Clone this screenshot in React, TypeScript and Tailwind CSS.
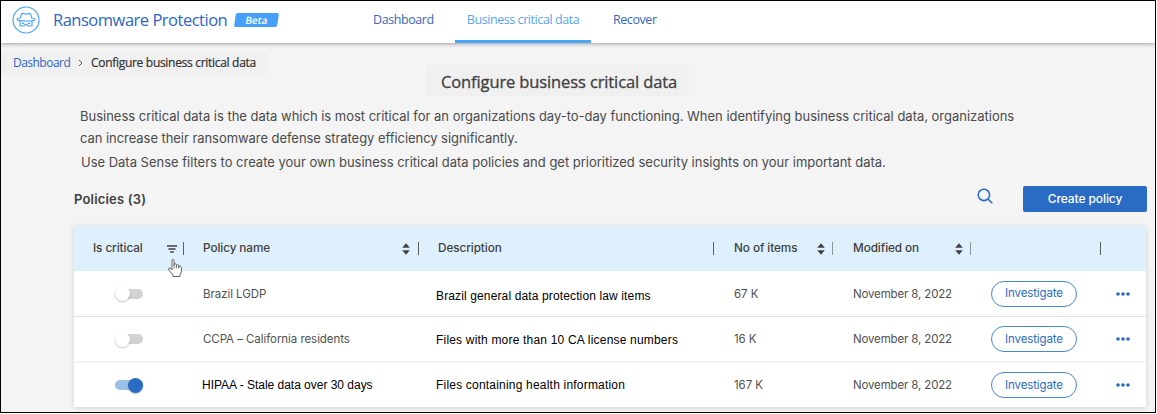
import React from "react";

const SEGOE = "font-['Open_Sans',sans-serif]";
const ARIAL = "font-['Liberation_Sans',sans-serif]";

function Logo() {
  return (
    <svg width="28" height="28" viewBox="0 0 28 28" fill="none" stroke="#4aa5f8" strokeWidth="1.2" strokeLinejoin="round">
      <circle cx="14" cy="14" r="13" />
      <path d="M8.4 12 L9.4 8.2 Q9.7 7.2 10.8 7.4 L12.6 7.9 Q14 8.2 15.4 7.9 L17.2 7.4 Q18.3 7.2 18.6 8.2 L19.6 12 Q22.8 12.4 22.8 13.4 Q22.8 15 14 15 Q5.2 15 5.2 13.4 Q5.2 12.4 8.4 12 Z" />
      <path d="M8 15 V20 H12.2 L13.2 18.4 H14.8 L15.8 20 H20 V15" />
      <path d="M9.8 17.4 H12.2 M15.8 17.4 H18.2" strokeWidth="1.4" />
    </svg>
  );
}

function Sort() {
  return (
    <svg width="8" height="12" viewBox="0 0 8 12" fill="#404040">
      <path d="M4 0.2 L7.8 4.8 H0.2 Z" />
      <path d="M4 11.8 L7.8 7.2 H0.2 Z" />
    </svg>
  );
}

function Filter() {
  return (
    <svg width="10" height="8" viewBox="0 0 10 8" stroke="#404040" strokeWidth="1.6">
      <path d="M0 1 H10 M1.4 4 H8.6 M3.2 7 H6.8" />
    </svg>
  );
}

function Bar({ light = false }: { light?: boolean }) {
  return <span className={light ? "h-[13px] w-px bg-[#8a939a]" : "h-[13px] w-px bg-[#5a6066]"} />;
}

function Toggle({ on }: { on: boolean }) {
  return (
    <span className={`flex h-[10px] w-7 items-center rounded-full ${on ? "justify-end bg-[#9cc0e8]" : "bg-[#d2d2d2]"}`}>
      <span className={`h-[15px] w-[15px] shrink-0 rounded-full shadow-[0_1px_2px_rgba(0,0,0,0.25)] ${on ? "bg-[#2a6cc4]" : "bg-white"}`} />
    </span>
  );
}

const rows = [
  { on: false, name: "Brazil LGDP", desc: "Brazil general data protection law items", n: "67 K", h: "h-[46px] border-b border-[#e2e2e2]", d: "pt-[4px] tracking-[0.13px]" },
  { on: false, name: "CCPA – California residents", desc: "Files with more than 10 CA license numbers", n: "16 K", h: "h-[46px] border-b-2 border-[#f2f2f2]", d: "pt-[2px] tracking-[0.19px]" },
  { on: true, name: "HIPAA - Stale data over 30 days", desc: "Files containing health information", n: "167 K", h: "h-[44px]", d: "tracking-[0.2px]" },
];

const GRID = "grid grid-cols-[110px_235px_295px_119px_138px_130px_45px] items-center";

export default function App() {
  return (
    <div className="h-[414px] w-[1157px] overflow-hidden bg-white">
      <div className="flex h-[413px] w-[1156px] flex-col overflow-hidden border border-black bg-[#f4f4f4] font-['Inter',sans-serif] text-[#404040]">
        <header className="flex h-[42px] shrink-0 items-center bg-white pl-[11px] shadow-[0_1px_4px_rgba(0,0,0,0.35)]">
          <div className="pb-[5px]"><Logo /></div>
          <span className={`ml-[13px] w-[182px] whitespace-nowrap pb-[5px] text-[16.5px] leading-6 tracking-[-0.49px] text-[#2f66c0] ${SEGOE}`}>Ransomware Protection</span>
          <span className="mb-[4px] flex h-[14px] w-[43px] -skew-x-[8deg] items-center justify-center rounded-[2px] bg-[#469ff8]">
            <span className={`text-[10px] font-semibold leading-none text-white ${SEGOE}`}>Beta</span>
          </span>
          <nav className={`ml-[95px] flex h-full whitespace-nowrap text-[12.5px] leading-[37px] tracking-[-0.43px] text-[#3768be] ${SEGOE}`}>
            <span className="w-[82px]">Dashboard</span>
            <span className="w-[136px] border-b-[3px] border-[#4aa5fa] text-center text-[#57a5ef]">Business critical data</span>
            <span className="ml-[22px]">Recover</span>
          </nav>
        </header>

        <div className={`mt-[9px] flex h-[22px] w-[266px] shrink-0 items-center bg-[#f0f0f0] pb-px pl-[12px] text-[12px] ${SEGOE}`}>
          <span className="w-[58px] tracking-[-0.52px] text-[#2f66c0]">Dashboard</span>
          <svg className="ml-[7px]" width="5" height="8" viewBox="0 0 5 8" fill="none" stroke="#555"><path d="M1 1 L4 4 L1 7" /></svg>
          <span className="ml-[8px] whitespace-nowrap tracking-[-0.3px] text-[#303030] [-webkit-text-stroke:0.2px]">Configure business critical data</span>
        </div>

        <h1 className={`-mt-[9px] ml-[425px] flex h-[31px] w-[263px] shrink-0 items-center whitespace-nowrap bg-[#f0f0f0] pl-[15px] pt-[2px] text-[16.5px] leading-6 tracking-[-0.12px] [-webkit-text-stroke:0.3px] ${SEGOE}`}>Configure business critical data</h1>

        <div className="ml-[79px] mt-[9px] shrink-0 whitespace-nowrap text-[13px] leading-[22px] tracking-[-0.013px] text-[#4a4a4a]">
          <p>Business critical data is the data which is most critical for an organizations day-to-day functioning. When identifying business critical data, organizations</p>
          <p className="tracking-[-0.055px]">can increase their ransomware defense strategy efficiency significantly.</p>
          <p className="mt-[2px] pl-px">Use Data Sense filters to create your own business critical data policies and get prioritized security insights on your important data.</p>
        </div>

        <div className="mt-[12px] flex h-[27px] shrink-0 items-center pl-[73px]">
          <h2 className="w-[903px] pt-[2px] text-[13px] font-semibold tracking-[0.18px]">Policies (3)</h2>
          <svg className="mb-[5px]" width="16" height="16" viewBox="0 0 16 16" fill="none" stroke="#2a6cc4" strokeWidth="1.6"><circle cx="6.9" cy="6.9" r="5.7" /><path d="M11 11 L15.3 15.3" /></svg>
          <button className="ml-[30px] h-[26px] w-[124px] rounded-[2px] bg-[#2a6cc4] pt-px text-[12px] font-medium tracking-[-0.1px] text-white">Create policy</button>
        </div>

        <div className="ml-[73px] mt-[14px] w-[1072px] shrink-0 bg-white shadow-[0_1px_5px_rgba(0,0,0,0.15)]">
          <div className={`${GRID} relative h-[45px] bg-[#def0fc] text-[11.75px] font-medium tracking-[-0.08px]`}>
            <span className="flex items-center justify-between pl-[19px]">Is critical<span className="flex w-[17px] items-center gap-[6px]"><Filter /><Bar /></span></span>
            <span className="flex items-center justify-between pl-[19px]">Policy name<span className="flex items-center gap-[8px]"><Sort /><Bar /></span></span>
            <span className="flex items-center justify-between pl-[19px]">Description<Bar /></span>
            <span className="flex items-center justify-between pl-[20px]">No of items<span className="flex items-center gap-[7px]"><Sort /><Bar light /></span></span>
            <span className="flex items-center justify-between pl-[20px]">Modified on<span className="flex items-center gap-[7px]"><Sort /><Bar light /></span></span>
            <span className="flex justify-end"><Bar /></span>
            <svg className="absolute left-[93px] top-[32px]" width="16" height="20" viewBox="0 0 16 20" fill="white" stroke="#666" strokeWidth="1" strokeLinejoin="round">
              <path d="M5 12 V2.6 Q5 1.4 6 1.4 Q7 1.4 7 2.6 V7.5 Q7 5.5 8.2 5.5 Q9.4 5.6 9.4 7.5 V8.5 Q9.5 6.4 10.6 6.4 Q11.8 6.6 11.8 8.4 V9.4 Q12 7.7 13.2 8 Q14.4 8.4 14.4 10 V14 L13 16.4 V18.5 H6 V17 L1.8 12 Q1 10.6 2 10.2 Q3 9.8 4 11 Z" />
              <path d="M7 7.5 V10.5 M9.4 8 V10.5 M11.8 9 V10.5" strokeWidth="0.8" />
            </svg>
          </div>
          {rows.map((r) => (
            <div key={r.name} className={`${GRID} ${r.h} text-[11.5px] tracking-[-0.06px] text-[#505050]`}>
              <span className="pl-[41px]"><Toggle on={r.on} /></span>
              <span className={`whitespace-nowrap ${r.on ? `pl-[18px] text-[12px] tracking-[-0.02px] text-black ${ARIAL}` : "pl-[19px] pt-[2px]"}`}>{r.name}</span>
              <span className={`whitespace-nowrap pl-[17px] text-[12px] text-black ${ARIAL} ${r.d}`}>{r.desc}</span>
              <span className="pl-[20px] pt-[2px]">{r.n}</span>
              <span className="whitespace-nowrap pl-[20px] pt-[2px] tracking-[-0.15px]">November 8, 2022</span>
              <span className="pl-[20px]"><button className="h-[26px] w-[86px] rounded-full border border-[#4a86d0] pt-px tracking-[-0.12px] text-[#2a6cc4]">Investigate</button></span>
              <svg className="ml-[15px]" width="14" height="4" viewBox="0 0 14 4" fill="#2a6cc4"><circle cx="2" cy="2" r="1.8" /><circle cx="7" cy="2" r="1.8" /><circle cx="12" cy="2" r="1.8" /></svg>
            </div>
          ))}
        </div>
      </div>
    </div>
  );
}
